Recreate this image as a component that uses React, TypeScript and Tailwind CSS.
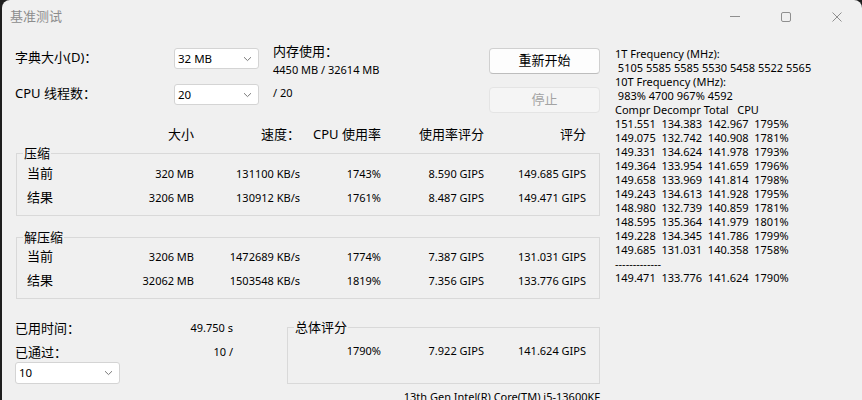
import React from "react";

const rightLines = [
  "1T Frequency (MHz):",
  " 5105 5585 5585 5530 5458 5522 5565",
  "10T Frequency (MHz):",
  " 983% 4700 967% 4592",
  "Compr Decompr Total   CPU",
  "151.551  134.383  142.967  1795%",
  "149.075  132.742  140.908  1781%",
  "149.331  134.624  141.978  1793%",
  "149.364  133.954  141.659  1796%",
  "149.658  133.969  141.814  1798%",
  "149.243  134.613  141.928  1795%",
  "148.980  132.739  140.859  1781%",
  "148.595  135.364  141.979  1801%",
  "149.228  134.345  141.786  1799%",
  "149.685  131.031  140.358  1758%",
  "-------------",
  "149.471  133.776  141.624  1790%",
];

function Chevron() {
  return (
    <svg width="9" height="6" viewBox="0 0 9 6" fill="none">
      <path d="M1 1.2 L4.5 4.6 L8 1.2" stroke="#7a7a7a" strokeWidth="1" />
    </svg>
  );
}

function Select({ value, className }: { value: string; className: string }) {
  return (
    <div
      className={`flex items-center justify-between rounded-[3px] border border-[#d4d4d4] bg-white pl-[3px] pr-[6px] text-[11.5px] text-black ${className}`}
    >
      <span>{value}</span>
      <Chevron />
    </div>
  );
}

type RowProps = { label: string; cells: string[] };

function DataRow({ label, cells }: RowProps) {
  return (
    <div className="flex h-[24px] items-center text-[11px] text-black">
      <div className="w-[103px] pl-[10px] text-[13px]">{label}</div>
      <div className="w-[74px] text-right">{cells[0]}</div>
      <div className="w-[106px] text-right">{cells[1]}</div>
      <div className="w-[81px] text-right">{cells[2]}</div>
      <div className="w-[103px] text-right">{cells[3]}</div>
      <div className="w-[102px] text-right">{cells[4]}</div>
    </div>
  );
}

function Group({
  title,
  className,
  children,
}: {
  title: string;
  className: string;
  children: React.ReactNode;
}) {
  return (
    <fieldset className={`border border-[#d9d9d9] ${className}`}>
      <legend className="ml-[6px] px-[1px] text-[13px] leading-[14px] text-black">
        {title}
      </legend>
      {children}
    </fieldset>
  );
}

export default function App() {
  return (
    <div className="h-[400px] w-[862px] overflow-hidden bg-[#1e1e1e] font-['Noto_Sans','Noto_Sans_CJK_SC',sans-serif]">
      <div className="ml-[2px] h-full rounded-t-[8px] bg-[#f0f0f0]">
        {/* Title bar */}
        <div className="flex h-[34px] items-center justify-between">
          <span className="pl-[8px] text-[13px] text-[#8c8c8c]">基准测试</span>
          <div className="flex">
            <div className="flex h-[34px] w-[51px] items-center justify-center">
              <svg width="10" height="10" viewBox="0 0 10 10">
                <path d="M0 4.5 H10" stroke="#8f8f8f" strokeWidth="1" />
              </svg>
            </div>
            <div className="flex h-[34px] w-[51px] items-center justify-center">
              <svg width="10" height="10" viewBox="0 0 10 10" fill="none">
                <rect x="0.5" y="0.5" width="9" height="9" rx="1.5" stroke="#8f8f8f" />
              </svg>
            </div>
            <div className="flex h-[34px] w-[51px] items-center justify-center">
              <svg width="10" height="10" viewBox="0 0 10 10">
                <path d="M0.5 0.5 L9.5 9.5 M9.5 0.5 L0.5 9.5" stroke="#8f8f8f" strokeWidth="1" />
              </svg>
            </div>
          </div>
        </div>

        <div className="flex pt-[10px]">
          {/* Left column */}
          <div className="ml-[13px] w-[585px]">
            <div className="flex">
              <div className="w-[159px] text-[13px] text-black">
                <div className="mt-[4px] leading-[19px]">字典大小(D)：</div>
                <div className="mt-[17px] leading-[19px]">CPU 线程数：</div>
              </div>
              <div className="w-[85px]">
                <Select value="32 MB" className="mt-[4px] h-[21px]" />
                <Select value="20" className="mt-[15px] h-[21px]" />
              </div>
              <div className="ml-[14px] w-[216px] text-black">
                <div className="text-[13px] leading-[14px]">内存使用：</div>
                <div className="mt-[5px] text-[11px] leading-[14px]">4450 MB / 32614 MB</div>
                <div className="mt-[9px] text-[11px] leading-[14px]">/ 20</div>
              </div>
              <div className="w-[111px]">
                <button className="mt-[4px] flex h-[26px] w-full items-center justify-center rounded-[4px] border border-[#d0d0d0] border-b-[#bdbdbd] bg-[#fdfdfd] text-[13px] text-black">
                  重新开始
                </button>
                <button className="mt-[13px] flex h-[26px] w-full items-center justify-center rounded-[4px] border border-[#e4e4e4] bg-[#f5f5f5] text-[13px] text-[#a3a3a3]">
                  停止
                </button>
              </div>
            </div>

            {/* Column headers */}
            <div className="ml-[1px] mt-[14px] flex text-[13px] leading-[14px] text-black">
              <div className="w-[104px]" />
              <div className="w-[74px] text-right">大小</div>
              <div className="w-[106px] text-right">速度：</div>
              <div className="w-[81px] text-right">CPU 使用率</div>
              <div className="w-[103px] text-right">使用率评分</div>
              <div className="w-[102px] text-right">评分</div>
            </div>

            <Group title="压缩" className="ml-[1px] mt-[5px] w-[584px] pb-[5px] pt-[2px]">
              <DataRow label="当前" cells={["320 MB", "131100 KB/s", "1743%", "8.590 GIPS", "149.685 GIPS"]} />
              <DataRow label="结果" cells={["3206 MB", "130912 KB/s", "1761%", "8.487 GIPS", "149.471 GIPS"]} />
            </Group>

            <Group title="解压缩" className="ml-[1px] mt-[14px] w-[584px] pb-[5px] pt-[1px]">
              <DataRow label="当前" cells={["3206 MB", "1472689 KB/s", "1774%", "7.387 GIPS", "131.031 GIPS"]} />
              <DataRow label="结果" cells={["32062 MB", "1503548 KB/s", "1819%", "7.356 GIPS", "133.776 GIPS"]} />
            </Group>

            {/* Bottom */}
            <div className="flex">
              <div className="w-[272px] text-black">
                <div className="mt-[22px] flex w-[218px] items-center justify-between leading-[14px]">
                  <span className="text-[13px]">已用时间：</span>
                  <span className="text-[11px]">49.750 s</span>
                </div>
                <div className="mt-[10px] flex w-[218px] items-center justify-between leading-[14px]">
                  <span className="text-[13px]">已通过：</span>
                  <span className="text-[11px]">10 /</span>
                </div>
                <Select value="10" className="mt-[3px] h-[22px] w-[105px]" />
              </div>
              <Group title="总体评分" className="mt-[21px] w-[313px] pb-[12px] pt-[5px]">
                <div className="flex h-[24px] items-center text-[11px] text-black">
                  <div className="w-[93px] text-right">1790%</div>
                  <div className="w-[103px] text-right">7.922 GIPS</div>
                  <div className="w-[102px] text-right">141.624 GIPS</div>
                </div>
              </Group>
            </div>

            <div className="mt-[6px] text-right text-[11px] leading-[14px] text-black">
              13th Gen Intel(R) Core(TM) i5-13600KF
            </div>
          </div>

          {/* Right column */}
          <div className="ml-[15px] mt-[3px] whitespace-pre text-[11px] leading-[14px] text-black">
            {rightLines.map((line, i) => (
              <div key={i}>{line}</div>
            ))}
          </div>
        </div>
      </div>
    </div>
  );
}
